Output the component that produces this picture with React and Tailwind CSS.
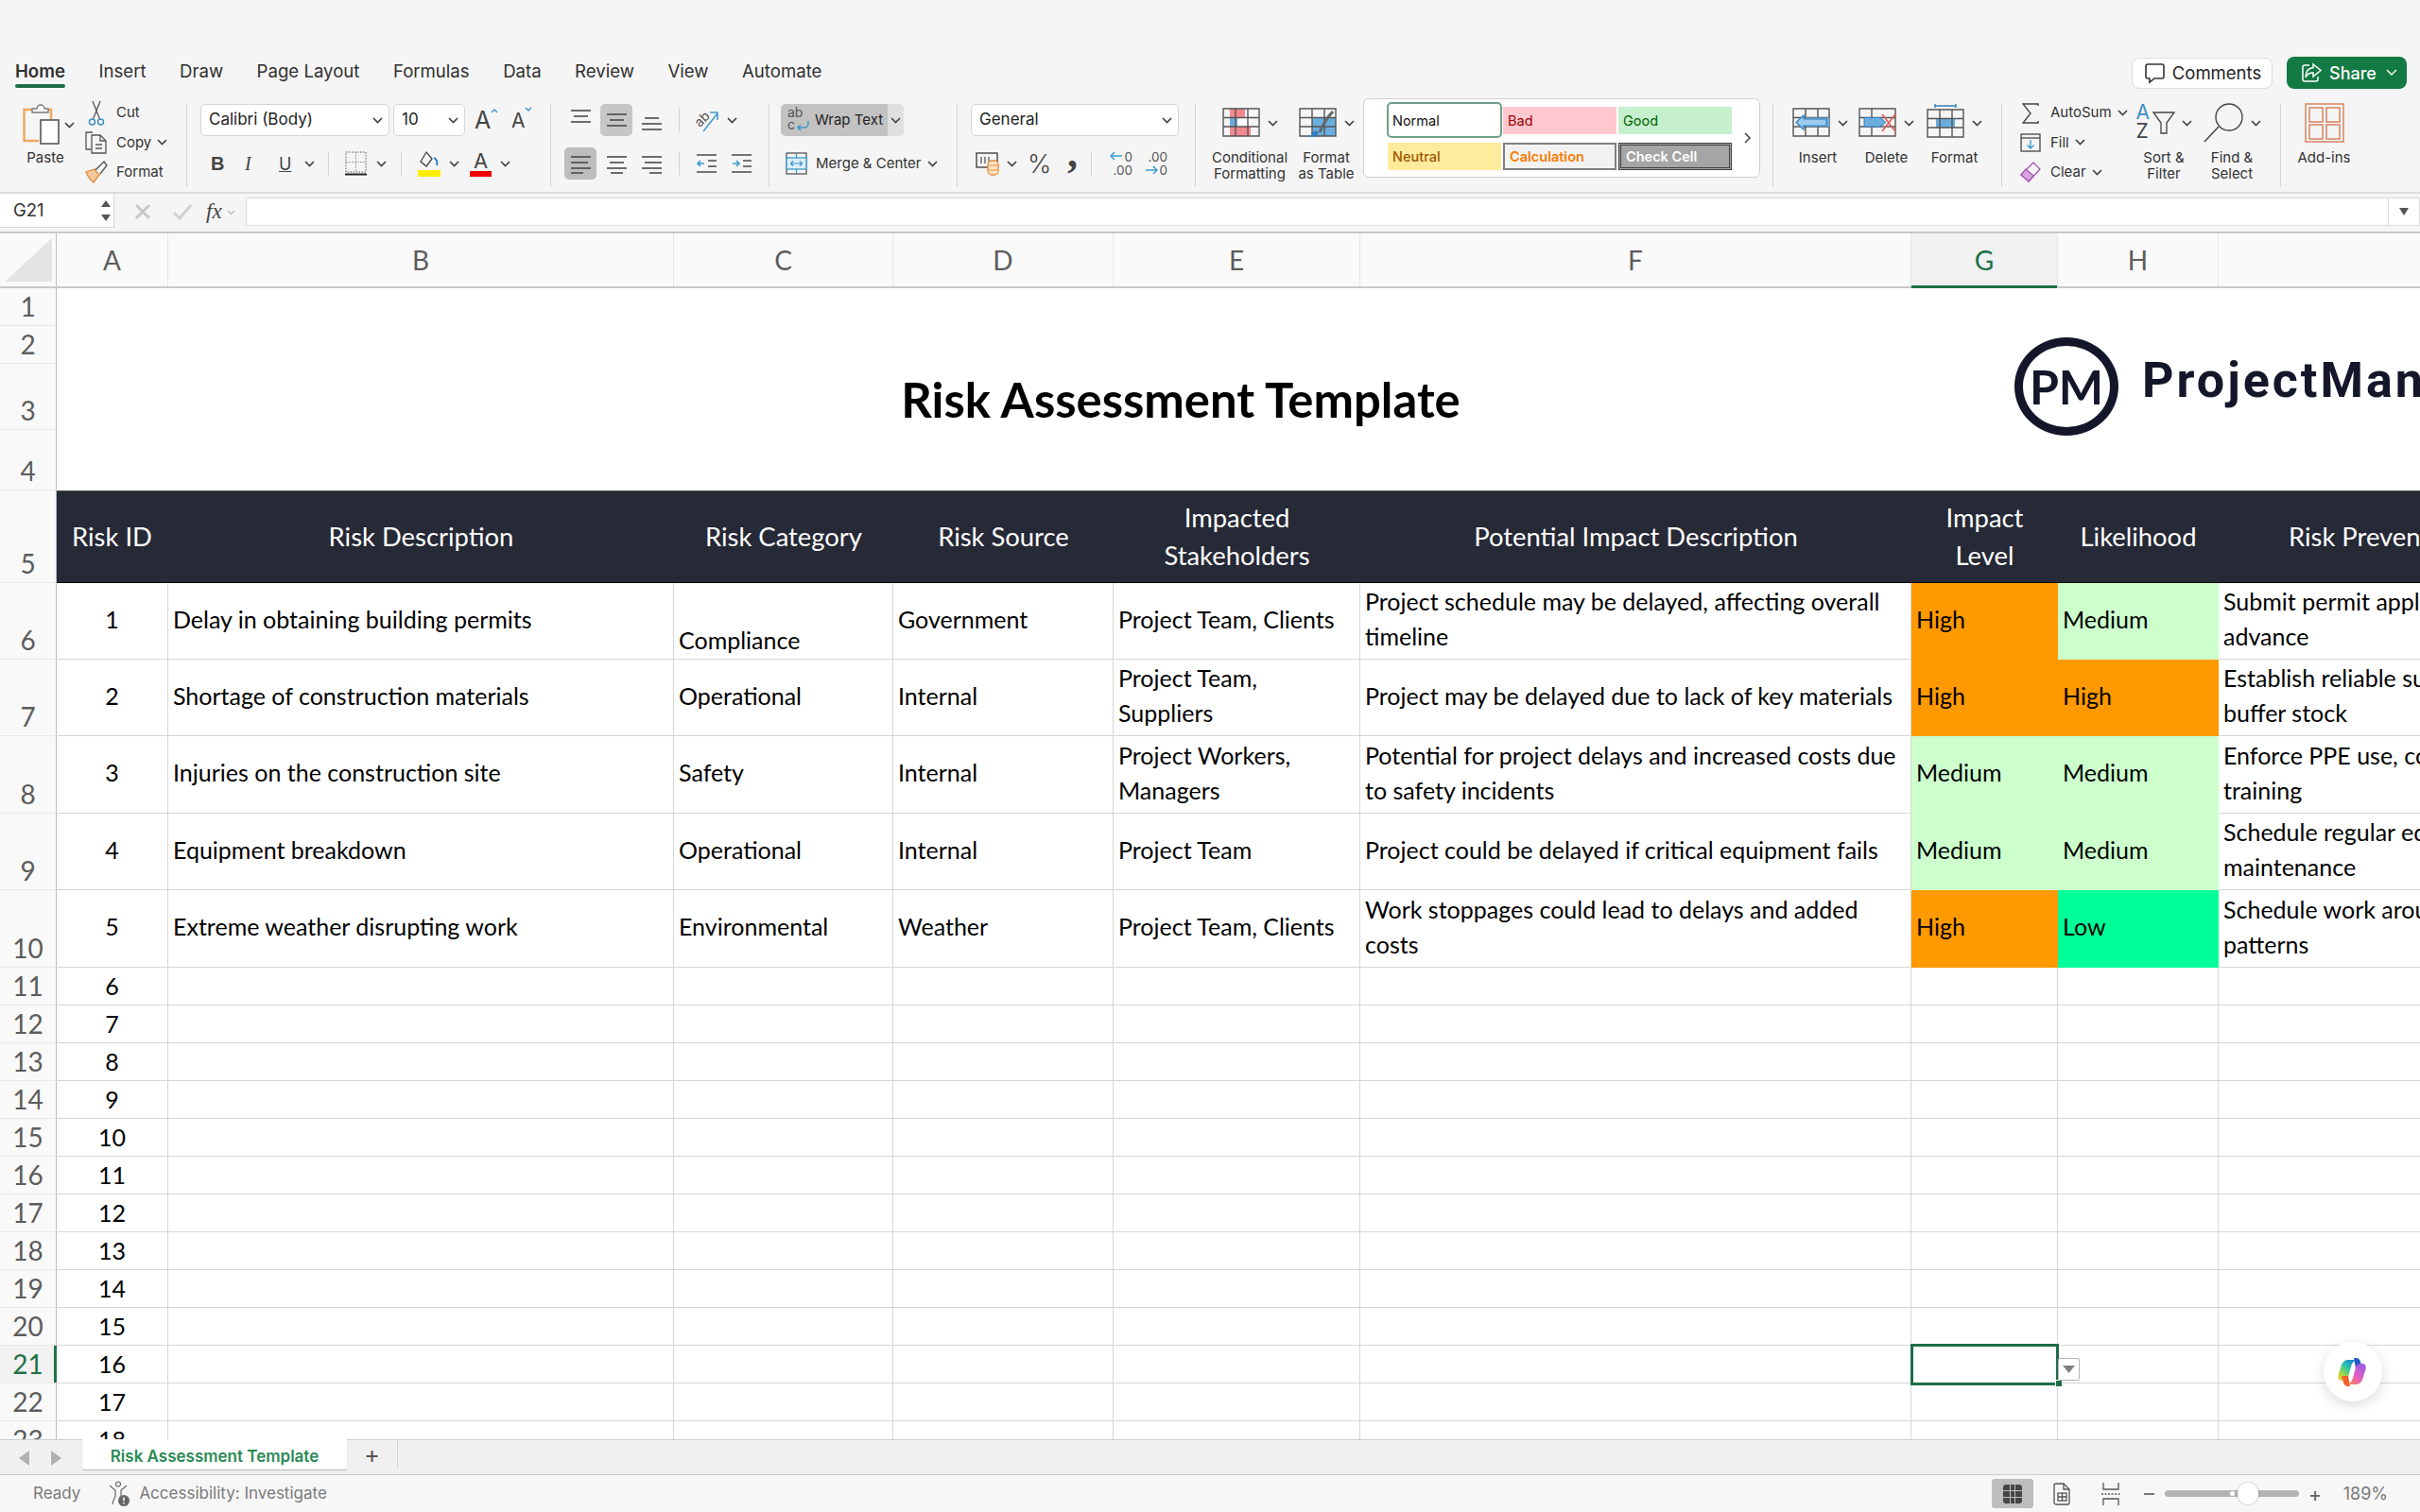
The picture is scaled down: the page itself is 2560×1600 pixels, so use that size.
import React from "react";

const colGrid = "grid grid-cols-[60px_118px_535px_232px_233px_261px_583px_155px_170px_500px] w-[2847px]";
const line = "border-[#d6d6d6]";

const columns = ["A", "B", "C", "D", "E", "F", "G", "H"];

const headers = [
  { text: "Risk ID" },
  { text: "Risk Description" },
  { text: "Risk Category" },
  { text: "Risk Source" },
  { text: "Impacted\nStakeholders" },
  { text: "Potential Impact Description" },
  { text: "Impact\nLevel" },
  { text: "Likelihood" },
  { text: "Risk Prevention" },
];

const risks = [
  { h: 81, id: 1, desc: "Delay in obtaining building permits", cat: "Compliance", src: "Government", who: "Project Team, Clients", imp: "Project schedule may be delayed, affecting overall\ntimeline", lvl: "High", like: "Medium", prev: "Submit permit applications well in\nadvance" },
  { h: 81, id: 2, desc: "Shortage of construction materials", cat: "Operational", src: "Internal", who: "Project Team,\nSuppliers", imp: "Project may be delayed due to lack of key materials", lvl: "High", like: "High", prev: "Establish reliable suppliers and\nbuffer stock" },
  { h: 82, id: 3, desc: "Injuries on the construction site", cat: "Safety", src: "Internal", who: "Project Workers,\nManagers", imp: "Potential for project delays and increased costs due\nto safety incidents", lvl: "Medium", like: "Medium", prev: "Enforce PPE use, conduct safety\ntraining" },
  { h: 81, id: 4, desc: "Equipment breakdown", cat: "Operational", src: "Internal", who: "Project Team", imp: "Project could be delayed if critical equipment fails", lvl: "Medium", like: "Medium", prev: "Schedule regular equipment\nmaintenance" },
  { h: 82, id: 5, desc: "Extreme weather disrupting work", cat: "Environmental", src: "Weather", who: "Project Team, Clients", imp: "Work stoppages could lead to delays and added\ncosts", lvl: "High", like: "Low", prev: "Schedule work around weather\npatterns" },
];

const fills = {
  High: "bg-[#ff9900]",
  Medium: "bg-[#ccffcc]",
  Low: "bg-[#00ff99]",
};

function Chev({ className = "" }) {
  return (
    <svg width="11" height="7" viewBox="0 0 11 7" className={"shrink-0 " + className} fill="none" stroke="#444" strokeWidth="1.7">
      <path d="M1 1l4.5 4.5L10 1" />
    </svg>
  );
}

function Lines({ rows, w = 21 }) {
  // rows: [y, x1, x2]
  return (
    <svg width={w} height="24" viewBox={`0 0 ${w} 24`} stroke="#4a4a4a" strokeWidth="1.6">
      {rows.map(([y, a, b], i) => (
        <path key={i} d={`M${a} ${y}H${b}`} />
      ))}
    </svg>
  );
}

function SmallAction({ icon, label, chev }) {
  return (
    <div className="flex items-center h-[32px] gap-[9px]">
      <div className="w-[24px] h-[30px] flex items-center justify-center">{icon}</div>
      <span className="text-[15px] text-[#333]">{label}</span>
      {chev && <Chev className="-ml-[3px]" />}
    </div>
  );
}

function Sep({ className = "" }) {
  return <div className={"w-[1px] h-[26px] bg-[#d4d4d4] " + className} />;
}

function Select({ label, className }) {
  return (
    <div className={"h-[34px] bg-white border border-[#d5d5d5] rounded-[5px] flex items-center justify-between pl-[8px] pr-[6px] text-[17px] text-[#222] " + className}>
      <span>{label}</span>
      <Chev />
    </div>
  );
}

function GridIcon({ children, w = 40, h = 32 }) {
  return (
    <svg width={w} height={h} viewBox={`0 0 ${w} ${h}`} fill="none">
      {children}
    </svg>
  );
}

const gridLines = "M1 1h38v29H1zM14 1v29M27 1v29M1 10.5h38M1 20h38";

function BigAction({ icon, label, chev = true, w }) {
  return (
    <div className={"flex flex-col items-center shrink-0 " + w}>
      <div className="h-[40px] flex items-center">
        {icon}
        {chev && <Chev className="ml-[8px]" />}
      </div>
      <div className="mt-[8px] text-center text-[15px] leading-[17px] text-[#333] whitespace-pre">{label}</div>
    </div>
  );
}

function StyleCell({ label, className }) {
  return (
    <div className={"w-[120px] h-[29px] flex items-center pl-[5px] text-[14.5px] " + className}>{label}</div>
  );
}

function Ribbon() {
  return (
    <div className="h-[203px] bg-[#f5f5f5] [font-family:Inter,sans-serif] shrink-0 overflow-hidden">
      {/* tabs row */}
      <div className="h-[104px] flex items-start pt-[60px] relative">
        <div className="flex pl-[16px] gap-[35.5px] text-[18.6px] text-[#303030] leading-[30px]">
          <div className="relative font-semibold w-[53px]">
            Home
            <div className="absolute left-0 right-0 top-[29px] h-[4px] rounded-full bg-[#1e6f47]" />
          </div>
          <div>Insert</div>
          <div>Draw</div>
          <div>Page Layout</div>
          <div>Formulas</div>
          <div>Data</div>
          <div>Review</div>
          <div>View</div>
          <div>Automate</div>
        </div>
        <div className="ml-auto flex items-center gap-[15px] pr-[14px]">
          <div className="w-[149px] h-[33px] bg-white border border-[#dedede] rounded-[8px] flex items-center justify-center gap-[7px] text-[18.5px] leading-none text-[#222]">
            <svg width="24" height="24" viewBox="0 0 24 24" fill="none" stroke="#333" strokeWidth="1.6">
              <path d="M5 3h15a2 2 0 0 1 2 2v11a2 2 0 0 1-2 2h-8l-5 4v-4H5a2 2 0 0 1-2-2V5a2 2 0 0 1 2-2z" />
            </svg>
            Comments
          </div>
          <div className="w-[127px] h-[34px] bg-[#137a43] rounded-[8px] flex items-center pl-[14px] gap-[7px] text-[18px] font-medium text-white">
            <svg width="24" height="24" viewBox="0 0 24 24" fill="none" stroke="#fff" strokeWidth="1.5">
              <path d="M10 4H5a2 2 0 0 0-2 2v13a2 2 0 0 0 2 2h12a2 2 0 0 0 2-2v-3" />
              <path d="M14 3l8 6.5-8 6.5v-4c-4 0-6.500 1.500-8 5 0-6 3-10 8-10.500z" />
            </svg>
            Share
            <svg width="12" height="8" viewBox="0 0 12 8" fill="none" stroke="#fff" strokeWidth="1.4" className="ml-[3px]">
              <path d="M1 1l5 5 5-5" />
            </svg>
          </div>
        </div>
      </div>

      {/* command groups */}
      <div className="flex items-start h-[94px]">
        {/* clipboard */}
        <div className="w-[198px] h-[88px] mt-[6px] border-r border-[#d4d4d4] flex shrink-0 pl-[24px]">
          <div className="w-[66px] shrink-0">
            <div className="flex items-center h-[44px]">
              <svg width="40" height="44" viewBox="0 0 40 44" fill="none">
                <path d="M13 6H1.500v33H17" stroke="#f0a860" strokeWidth="2.500" />
                <path d="M27 6h3v10" stroke="#f0a860" strokeWidth="2.500" />
                <path d="M10 9V5h5a4 4 0 0 1 8 0h4v4z" fill="#fff" stroke="#777" strokeWidth="1.300" />
                <rect x="19" y="17" width="19" height="25" fill="#fff" stroke="#555" strokeWidth="1.600" />
              </svg>
              <Chev className="ml-[4px]" />
            </div>
            <div className="text-[15px] leading-[18px] mt-[4px] text-[#333] w-[48px] text-center">Paste</div>
          </div>
          <div className="-mt-[6px] flex flex-col">
            <SmallAction
              label="Cut"
              icon={
                <svg width="18" height="28" viewBox="0 0 18 28" fill="none">
                  <path d="M13 1L5.500 20M5 1l7.500 19" stroke="#555" strokeWidth="1.300" />
                  <circle cx="4.500" cy="23" r="3" stroke="#3d8fc4" strokeWidth="1.500" />
                  <circle cx="13.500" cy="23" r="3" stroke="#3d8fc4" strokeWidth="1.500" />
                </svg>
              }
            />
            <SmallAction
              label="Copy"
              chev
              icon={
                <svg width="24" height="24" viewBox="0 0 24 24" fill="none" stroke="#555" strokeWidth="1.300">
                  <path d="M8 1H1v18h5" />
                  <path d="M7 4h9l6 6v13H7z" fill="#f5f5f5" />
                  <path d="M16 4v6h6M11 14h7M11 18h7" />
                </svg>
              }
            />
            <SmallAction
              label="Format"
              icon={
                <svg width="24" height="24" viewBox="0 0 24 24" fill="none">
                  <path d="M1 12l9-3 5 6-6 8c-3-2-6-6-8-11z" fill="#f8c99a" stroke="#e28a3c" strokeWidth="1.300" />
                  <path d="M11 10l9-9 3 4-7 9" stroke="#555" strokeWidth="1.400" fill="#f5f5f5" />
                </svg>
              }
            />
          </div>
        </div>

        {/* font */}
        <div className="w-[385px] h-[88px] mt-[6px] border-r border-[#d4d4d4] shrink-0 pl-[14px]">
          <div className="flex items-center h-[34px]">
            <Select label="Calibri (Body)" className="w-[200px]" />
            <Select label="10" className="w-[76px] ml-[4px]" />
            <div className="relative text-[25px] text-[#444] ml-[10px] w-[29px] leading-none">
              A
              <svg width="8" height="5" viewBox="0 0 8 5" fill="none" stroke="#3d8fc4" strokeWidth="1.300" className="absolute left-[17px] top-[0px]">
                <path d="M1 4l3-3 3 3" />
              </svg>
            </div>
            <div className="relative text-[21px] text-[#444] ml-[10px] w-[24px] leading-none">
              A
              <svg width="8" height="5" viewBox="0 0 8 5" fill="none" stroke="#3d8fc4" strokeWidth="1.300" className="absolute left-[14px] top-[-4px]">
                <path d="M1 1l3 3 3-3" />
              </svg>
            </div>
          </div>
          <div className="flex items-center h-[34px] mt-[12px]">
            <span className="w-[14px] ml-[11px] text-[20px] font-bold text-[#444] [font-family:'Liberation_Sans',sans-serif]">B</span>
            <span className="w-[14px] ml-[22px] text-[20px] italic text-[#444] [font-family:'Liberation_Serif',serif]">I</span>
            <span className="w-[14px] ml-[22px] text-[18px] underline text-[#444]">U</span>
            <Chev className="ml-[13px]" />
            <Sep className="ml-[14px]" />
            <svg width="23" height="26" viewBox="0 0 23 26" fill="none" className="ml-[17px]">
              <rect x="1" y="1" width="21" height="21" stroke="#555" strokeWidth="1" strokeDasharray="1.500 1.500" />
              <path d="M11.500 1v21M1 11.500h21" stroke="#888" strokeWidth="1" strokeDasharray="1.500 1.500" />
              <path d="M0 24.500h23" stroke="#222" strokeWidth="2" />
            </svg>
            <Chev className="ml-[10px]" />
            <Sep className="ml-[15px]" />
            <svg width="24" height="28" viewBox="0 0 24 28" fill="none" className="ml-[17px]">
              <path d="M9 2L3 12l6 5 6-8z" stroke="#444" strokeWidth="1.300" />
              <path d="M17 8c3 1 4 5 3 8" stroke="#2f7fc0" strokeWidth="2" />
              <rect x="0" y="21" width="24" height="7" fill="#ffee00" />
            </svg>
            <Chev className="ml-[9px]" />
            <div className="relative w-[23px] ml-[11px] h-[28px] text-center text-[22px] leading-[22px] text-[#444]">
              A
              <div className="absolute left-0 right-0 bottom-0 h-[6px] bg-[#ee0000]" />
            </div>
            <Chev className="ml-[9px]" />
          </div>
        </div>

        {/* alignment */}
        <div className="w-[231px] h-[88px] mt-[6px] border-r border-[#d4d4d4] shrink-0 pl-[14px]">
          <div className="flex items-center h-[34px]">
            <div className="w-[34px] flex justify-center">
              <Lines rows={[[2, 0, 21], [8, 3, 18], [14, 0, 21]]} />
            </div>
            <div className="w-[34px] h-[34px] ml-[4px] rounded-[5px] bg-[#c6c6c6] flex items-center justify-center">
              <Lines rows={[[6, 0, 21], [12, 3, 18], [18, 0, 21]]} />
            </div>
            <div className="w-[21px] ml-[10px]">
              <Lines rows={[[10, 3, 18], [16, 0, 21], [22, 0, 21]]} />
            </div>
            <Sep className="ml-[18px]" />
            <div className="relative w-[25px] h-[30px] ml-[17px]">
              <span className="absolute left-[-2px] top-[3px] -rotate-45 text-[14px] text-[#555]">ab</span>
              <svg width="25" height="30" viewBox="0 0 25 30" fill="none" stroke="#3d9ac9" strokeWidth="1.500" className="absolute inset-0">
                <path d="M8 27L23 8M15 7h8v8" />
              </svg>
            </div>
            <Chev className="ml-[8px]" />
          </div>
          <div className="flex items-center h-[34px] mt-[12px]">
            <div className="w-[34px] h-[34px] rounded-[5px] bg-[#bdbdbd] flex items-center justify-center">
              <Lines rows={[[5, 0, 21], [11, 0, 18], [17, 0, 21], [22, 0, 13]]} />
            </div>
            <div className="w-[34px] ml-[4px] flex justify-center">
              <Lines rows={[[5, 0, 21], [11, 3, 18], [17, 0, 21], [22, 4, 17]]} />
            </div>
            <div className="w-[21px] ml-[10px]">
              <Lines rows={[[5, 0, 21], [11, 3, 21], [17, 0, 21], [22, 8, 21]]} />
            </div>
            <Sep className="ml-[18px]" />
            <svg width="21" height="24" viewBox="0 0 21 24" fill="none" className="ml-[18px]">
              <path d="M0 3h21M12 9h9M12 15h9M0 21h21" stroke="#4a4a4a" strokeWidth="1.600" />
              <path d="M8 12H1M4 9l-3 3 3 3" stroke="#3d9ac9" strokeWidth="1.600" />
            </svg>
            <svg width="21" height="24" viewBox="0 0 21 24" fill="none" className="ml-[16px]">
              <path d="M0 3h21M12 9h9M12 15h9M0 21h21" stroke="#4a4a4a" strokeWidth="1.600" />
              <path d="M1 12h7M5 9l3 3-3 3" stroke="#3d9ac9" strokeWidth="1.600" />
            </svg>
          </div>
        </div>

        {/* wrap and merge */}
        <div className="w-[199px] h-[88px] mt-[6px] border-r border-[#d4d4d4] shrink-0 pl-[12px]">
          <div className="flex w-[130px] h-[34px] rounded-[5px] overflow-hidden">
            <div className="w-[113px] bg-[#c2c2c2] flex items-center pl-[7px]">
              <div className="relative w-[22px] h-[30px] text-[14px] leading-[13px] text-[#555]">
                ab
                <br />c
                <svg width="14" height="12" viewBox="0 0 14 12" fill="none" stroke="#3d9ac9" strokeWidth="1.500" className="absolute left-[9px] top-[16px]">
                  <path d="M13 0v3a4 4 0 0 1-4 4H2M5 4L2 7l3 3" />
                </svg>
              </div>
              <span className="ml-[7px] text-[15px] text-[#222]">Wrap Text</span>
            </div>
            <div className="flex-1 bg-[#e0e0e0] flex items-center justify-center">
              <Chev />
            </div>
          </div>
          <div className="flex items-center h-[34px] mt-[12px] pl-[5px]">
            <svg width="23" height="24" viewBox="0 0 23 24" fill="none">
              <rect x="1" y="1" width="21" height="22" stroke="#555" strokeWidth="1.300" />
              <rect x="1" y="6" width="21" height="12" fill="#dbeef8" stroke="#3d9ac9" strokeWidth="1.300" />
              <path d="M6 12h11M8 9.500L5.500 12 8 14.500M15 9.500l2.500 2.500-2.500 2.500M11.500 1v5M11.500 18v5" stroke="#3d8fc4" strokeWidth="1.200" />
            </svg>
            <span className="ml-[9px] text-[15px] text-[#333]">Merge &amp; Center</span>
            <Chev className="ml-[7px]" />
          </div>
        </div>

        {/* number */}
        <div className="w-[252px] h-[88px] mt-[6px] border-r border-[#d4d4d4] shrink-0 pl-[14px]">
          <Select label="General" className="w-[220px]" />
          <div className="flex items-center h-[34px] mt-[12px] pl-[5px]">
            <svg width="25" height="26" viewBox="0 0 25 26" fill="none">
              <rect x="1" y="2" width="22" height="15" stroke="#444" strokeWidth="1.400" />
              <path d="M6 6v7M10 6v7M14 6v7" stroke="#666" strokeWidth="1.400" />
              <rect x="13" y="10" width="11" height="15" rx="4" fill="#fbe3c8" stroke="#e78f3a" strokeWidth="1.300" />
              <path d="M13 15h11M13 20h11" stroke="#e78f3a" strokeWidth="1.200" />
            </svg>
            <Chev className="ml-[8px]" />
            <span className="ml-[11px] w-[23px] text-[27px] leading-none font-light text-[#444]">%</span>
            <span className="ml-[19px] w-[12px] text-[44px] leading-none font-bold text-[#444] -mt-[20px] [font-family:'Liberation_Serif',serif]">,</span>
            <Sep className="ml-[13px]" />
            <div className="relative w-[24px] h-[28px] ml-[19px] text-[13.500px] leading-[14px] text-right text-[#555]">
              0
              <br />.00
              <svg width="14" height="10" viewBox="0 0 14 10" fill="none" stroke="#3d9ac9" strokeWidth="1.500" className="absolute left-0 top-[1px]">
                <path d="M13 5H1M5 1L1 5l4 4" />
              </svg>
            </div>
            <div className="relative w-[24px] h-[28px] ml-[13px] text-[13.500px] leading-[14px] text-right text-[#555]">
              .00
              <br />0
              <svg width="14" height="10" viewBox="0 0 14 10" fill="none" stroke="#3d9ac9" strokeWidth="1.500" className="absolute left-0 top-[16px]">
                <path d="M1 5h12M9 1l4 4-4 4" />
              </svg>
            </div>
          </div>
        </div>

        {/* styles */}
        <div className="w-[611px] h-[88px] mt-[6px] border-r border-[#d4d4d4] shrink-0 flex">
          <BigAction
            w="w-[90px] ml-[12px]"
            label={"Conditional\nFormatting"}
            icon={
              <GridIcon>
                <path d="M8 1h16v10H8zM14 10h16v10H14zM8 20h22v10H8z" fill="#f2888e" />
                <path d="M8 10.500h14V20H8z" fill="#6aaee0" />
                <path d="M16 10.500h14V20H16z" fill="#fff" />
                <path d={gridLines} stroke="#555" strokeWidth="1.400" />
              </GridIcon>
            }
          />
          <BigAction
            w="w-[70px] ml-[1px]"
            label={"Format\nas Table"}
            icon={
              <GridIcon>
                <path d="M14 10.500h25V30H14z" fill="#6aaee0" />
                <path d={gridLines} stroke="#555" strokeWidth="1.400" />
                <path d="M36 4C30 10 24 20 22 26" stroke="#666" strokeWidth="3" />
                <path d="M12 31c3 0 8-1 9-5l-3-2c-3 1-5 4-6 7z" fill="#2f7fc0" />
              </GridIcon>
            }
          />
          <div className="w-[420px] h-[84px] -mt-[6px] ml-[4px] bg-white border border-[#cfcfcf] rounded-[6px] relative pl-[25px] shrink-0">
            <div className="flex gap-[2px] mt-[8px]">
              <div className="relative">
                <StyleCell label="Normal" className="bg-white text-[#111]" />
                <div className="absolute -left-[1px] -right-[1px] -top-[5px] -bottom-[4px] rounded-[5px] border-2 border-[#6f9f88]" />
              </div>
              <StyleCell label="Bad" className="bg-[#ffc7ce] text-[#9c0006]" />
              <StyleCell label="Good" className="bg-[#c6efce] text-[#006100]" />
            </div>
            <div className="flex gap-[2px] mt-[9px]">
              <StyleCell label="Neutral" className="font-medium bg-[#ffeb9c] text-[#9c5700]" />
              <StyleCell label="Calculation" className="font-semibold bg-[#f2f2f2] text-[#fa7d00] border-2 border-[#7f7f7f]" />
              <StyleCell label="Check Cell" className="font-semibold bg-[#a5a5a5] text-white border-[3px] border-double border-[#3f3f3f]" />
            </div>
            <svg width="8" height="12" viewBox="0 0 8 12" fill="none" stroke="#444" strokeWidth="1.500" className="absolute right-[8px] top-[35px]">
              <path d="M1 1l5 5-5 5" />
            </svg>
          </div>
        </div>

        {/* cells */}
        <div className="w-[242px] h-[88px] mt-[6px] border-r border-[#d4d4d4] shrink-0 flex pl-[19px] gap-[17px]">
          <BigAction
            w="w-[56px]"
            label="Insert"
            icon={
              <GridIcon w={44}>
                <path d="M5 1h38v29H5zM18 1v29M31 1v29M5 10.500h38M5 20h38" stroke="#555" strokeWidth="1.400" />
                <path d="M18 10.500h25V20H18z" fill="#6aaee0" />
                <path d="M16 8l-8 7.500 8 7.500v-4h24v-7H16z" fill="#9ccbee" stroke="#2f7fc0" strokeWidth="1.200" />
              </GridIcon>
            }
          />
          <BigAction
            w="w-[55px]"
            label="Delete"
            icon={
              <GridIcon>
                <path d="M1 1h38v29H1zM14 1v29M1 10.500h38M1 20h38" stroke="#555" strokeWidth="1.400" />
                <path d="M6 10.500h17l6 5-6 4.500H6z" fill="#6aaee0" stroke="#2f7fc0" strokeWidth="1" />
                <path d="M25 7l14 18M39 7L25 25" stroke="#e0605a" strokeWidth="1.800" />
              </GridIcon>
            }
          />
          <BigAction
            w="w-[55px]"
            label="Format"
            icon={
              <GridIcon h={40}>
                <path d="M9 2h22M9 0v4M31 0v4" stroke="#2f7fc0" strokeWidth="1.400" />
                <g transform="translate(0 5)">
                  <path d="M10 10.500h20V20H10z" fill="#6aaee0" />
                  <path d={gridLines} stroke="#555" strokeWidth="1.400" />
                </g>
              </GridIcon>
            }
          />
        </div>

        {/* editing */}
        <div className="w-[295px] h-[88px] mt-[6px] border-r border-[#d4d4d4] shrink-0 flex pl-[18px]">
          <div className="-mt-[6px] flex flex-col w-[117px] shrink-0">
            <SmallAction
              label="AutoSum"
              chev
              icon={
                <svg width="18" height="22" viewBox="0 0 18 22" fill="none" stroke="#444" strokeWidth="1.400">
                  <path d="M17 3V1H1l8 10-8 10h16v-2" />
                </svg>
              }
            />
            <SmallAction
              label="Fill"
              chev
              icon={
                <svg width="22" height="20" viewBox="0 0 22 20" fill="none">
                  <rect x="1" y="1" width="20" height="18" stroke="#444" strokeWidth="1.300" />
                  <path d="M1 5h20" stroke="#444" strokeWidth="1.300" />
                  <path d="M11 7v9M7.500 12.500L11 16l3.500-3.500" stroke="#3d9ac9" strokeWidth="1.400" />
                </svg>
              }
            />
            <SmallAction
              label="Clear"
              chev
              icon={
                <svg width="22" height="22" viewBox="0 0 22 22" fill="none" stroke="#a855b5" strokeWidth="1.300">
                  <path d="M14 1l7 7-12 13-8-7z" />
                  <path d="M1 14l5-6 8 7-5 6z" fill="#d6a5dd" />
                </svg>
              }
            />
          </div>
          <BigAction
            w="w-[72px] shrink-0"
            label={"Sort &\nFilter"}
            icon={
              <div className="relative w-[40px] h-[42px] text-[21px] leading-[20px]">
                <div className="text-[#3d8fc4]">A</div>
                <div className="text-[#444]">Z</div>
                <svg width="24" height="24" viewBox="0 0 24 24" fill="none" stroke="#444" strokeWidth="1.300" className="absolute left-[17px] top-[9px]">
                  <path d="M1 1h22l-8 11v11H9V12z" />
                </svg>
              </div>
            }
          />
          <BigAction
            w="w-[72px] shrink-0"
            label={"Find &\nSelect"}
            icon={
              <svg width="42" height="42" viewBox="0 0 42 42" fill="none" stroke="#444" strokeWidth="1.400">
                <ellipse cx="27" cy="15" rx="14" ry="14" />
                <path d="M16 25L1 41" />
              </svg>
            }
          />
        </div>

        {/* add-ins */}
        <div className="w-[148px] h-[88px] mt-[6px] shrink-0 pl-[8px]">
          <BigAction
            w="w-[75px]"
            chev={false}
            label="Add-ins"
            icon={
              <svg width="42" height="42" viewBox="0 0 42 42" fill="none" stroke="#d9825f" strokeWidth="1.500">
                <rect x="1" y="1" width="40" height="40" />
                <rect x="5" y="5" width="14" height="15" />
                <rect x="23" y="5" width="14" height="15" />
                <rect x="5" y="23" width="14" height="15" />
                <rect x="23" y="23" width="14" height="15" />
              </svg>
            }
          />
        </div>
      </div>
      <div className="h-[5px]" />
    </div>
  );
}

function FormulaBar() {
  return (
    <div className="h-[42px] bg-[#f5f5f5] border-t-2 border-[#dcdcdc] flex items-start shrink-0 [font-family:Inter,sans-serif]">
      <div className="w-[121px] h-[36px] bg-white border-r border-b border-[#d8d8d8] flex items-center justify-between pl-[14px] pr-[3px] text-[18.5px] text-[#333]">
        G21
        <svg width="10" height="24" viewBox="0 0 10 24" fill="#555">
          <path d="M5 1l5 7H0zM5 23l5-7H0z" />
        </svg>
      </div>
      <svg width="18" height="18" viewBox="0 0 18 18" stroke="#c8c8c8" strokeWidth="3" className="ml-[21px] mt-[10px]">
        <path d="M2 2l14 14M16 2L2 16" />
      </svg>
      <svg width="22" height="18" viewBox="0 0 22 18" fill="none" stroke="#d0d0d0" strokeWidth="3" className="ml-[22px] mt-[10px]">
        <path d="M2 10l6 6L20 2" />
      </svg>
      <span className="ml-[14px] mt-[2px] text-[23px] italic text-[#444] [font-family:'Liberation_Serif',serif]">fx</span>
      <svg width="9" height="6" viewBox="0 0 9 6" fill="none" stroke="#bbb" strokeWidth="1.300" className="ml-[5px] mt-[17px]">
        <path d="M1 1l3.500 3.500L8 1" />
      </svg>
      <div className="ml-[11px] mt-[4px] h-[30px] flex-1 bg-white border border-[#dadada] rounded-l-[3px] flex justify-end">
        <div className="w-[33px] h-[28px] border-l border-[#dadada] flex items-center justify-center">
          <svg width="10" height="8" viewBox="0 0 10 8" fill="#555">
            <path d="M0 0h10L5 8z" />
          </svg>
        </div>
      </div>
    </div>
  );
}

function ColumnHeader() {
  return (
    <div className={colGrid + " h-[60px] bg-[#fafafa] border-y-2 border-[#c8c8c8] shrink-0 [font-family:Lato,sans-serif] text-[28px] text-[#5c5c5c]"}>
      <div className="border-r border-[#bdbdbd] flex items-center justify-center">
        <svg width="50" height="46" viewBox="0 0 50 46">
          <path d="M50 0v46H0z" fill="#e4e4e4" />
        </svg>
      </div>
      {columns.map((c) => (
        <div
          key={c}
          className={
            c === "G"
              ? "relative flex items-center justify-center bg-[#f1f1f1] text-[#1f7145] border-r border-[#e6e6e6]"
              : "flex items-center justify-center border-r border-[#e6e6e6]"
          }
        >
          {c}
          {c === "G" && <div className="absolute left-0 right-0 -bottom-[2px] h-[3px] bg-[#1f7145]" />}
        </div>
      ))}
      <div />
    </div>
  );
}

function RowNum({ n, h }) {
  const active = n === 21;
  return (
    <div
      className={
        "relative flex items-end justify-center border-r border-b border-r-[#bdbdbd] border-b-[#e8e8e8] text-[28px] leading-[34px] pb-[3px] " +
        (active ? "bg-[#f1f1f1] text-[#1f7145]" : "bg-[#f9f9f9] text-[#5c5c5c]")
      }
      style={h ? { height: h } : undefined}
    >
      {n}
      {active && <div className="absolute -right-[1px] top-0 bottom-0 w-[3px] bg-[#1f7145]" />}
    </div>
  );
}

function Cell({ children, className = "" }) {
  return (
    <div className={"flex items-center whitespace-pre-line overflow-hidden px-[5px] leading-[37px] border-r border-b " + line + " " + className}>
      {children}
    </div>
  );
}

function Sheet() {
  const blank = [];
  for (let i = 0; i < 13; i++) blank.push(i + 6);

  return (
    <div className="relative flex-1 overflow-hidden bg-white [font-family:Lato,sans-serif] text-[25px] text-black">
      {/* rows 1-4 with the merged title block */}
      <div className="flex h-[214px]">
        <div className="w-[60px] shrink-0">
          <RowNum n={1} h={40} />
          <RowNum n={2} h={40} />
          <RowNum n={3} h={70} />
          <RowNum n={4} h={64} />
        </div>
        <div className="relative w-[2378px] shrink-0 pt-[90px] text-center text-[50.8px] leading-[56px] font-bold text-black">
          Risk Assessment Template
          {/* logo picture floats above the cells */}
          <div className="absolute left-[2071px] top-[52px] w-[110px] h-[104px] rounded-[50%] border-[9px] border-[#14172a] flex items-center justify-center text-[50px] font-bold leading-none text-[#14172a]">
            PM
          </div>
          <div className="absolute left-[2206px] top-[68px] text-[52px] leading-[60px] font-bold tracking-[3px] text-left text-[#14172a] whitespace-nowrap [font-family:Roboto,sans-serif]">
            ProjectManager
          </div>
        </div>
      </div>

      {/* table head */}
      <div className={colGrid + " h-[98px]"}>
        <RowNum n={5} />
        {headers.map((h, i) => (
          <div
            key={h.text}
            className={
              "bg-[#262936] border-y border-t-[#555] border-b-black flex items-center text-white text-[27.4px] leading-[40px] pb-[1px] whitespace-pre-line " +
              (i === 0 ? "justify-center pr-[1px]" : i === 8 ? "pl-[74px]" : "justify-center text-center")
            }
          >
            {h.text}
          </div>
        ))}
      </div>

      {/* filled rows */}
      {risks.map((r, i) => (
        <div key={r.id} className={colGrid} style={{ height: r.h }}>
          <RowNum n={i + 6} />
          <Cell className="justify-center pb-[4px]">{r.id}</Cell>
          <Cell className="pb-[4px]">{r.desc}</Cell>
          <Cell className={r.id === 1 ? "items-end pb-[1px]" : "pb-[4px]"}>{r.cat}</Cell>
          <Cell className="pb-[4px]">{r.src}</Cell>
          <Cell className="pb-[4px]">{r.who}</Cell>
          <Cell className="pb-[4px]">{r.imp}</Cell>
          <div className={"flex items-center pl-[5px] pb-[4px] " + fills[r.lvl]}>{r.lvl}</div>
          <div className={"flex items-center pl-[5px] pb-[4px] " + fills[r.like]}>{r.like}</div>
          <Cell className="pb-[4px]">{r.prev}</Cell>
        </div>
      ))}

      {/* empty numbered rows */}
      {blank.map((id, i) => (
        <div key={id} className={colGrid + " h-[40px]"}>
          <RowNum n={i + 11} />
          <Cell className="justify-center pb-[1px]">{id}</Cell>
          <Cell />
          <Cell />
          <Cell />
          <Cell />
          <Cell />
          <Cell />
          <Cell />
          <Cell />
        </div>
      ))}

      {/* selected cell G21 */}
      <div className="absolute left-[2021px] top-[1117px] w-[157px] h-[44px] border-[3px] border-[#1f6d47]" />
      <div className="absolute left-[2174px] top-[1155px] w-[8px] h-[8px] bg-[#1f6d47] border border-white" />
      <div className="absolute left-[2177px] top-[1132px] w-[23px] h-[24px] bg-white border border-[#b5b5b5] rounded-[2px] flex items-center justify-center">
        <svg width="13" height="8" viewBox="0 0 13 8" fill="#808080">
          <path d="M0 0h13L6.500 8z" />
        </svg>
      </div>

      {/* copilot button */}
      <div className="absolute left-[2458px] top-[1115px] w-[62px] h-[63px] rounded-full bg-white shadow-[0_4px_14px_rgba(0,0,0,0.14)] flex items-center justify-center">
        <svg width="32" height="30" viewBox="0 0 32 30">
          <defs>
            <linearGradient id="cpA" x1="0.9" y1="0" x2="0.1" y2="1">
              <stop offset="0" stopColor="#1f74d8" />
              <stop offset="0.4" stopColor="#25c4b0" />
              <stop offset="0.75" stopColor="#a5d63f" />
              <stop offset="1" stopColor="#f5cf3a" />
            </linearGradient>
            <linearGradient id="cpB" x1="0.9" y1="0" x2="0.1" y2="1">
              <stop offset="0" stopColor="#8f5be8" />
              <stop offset="0.55" stopColor="#e45fc4" />
              <stop offset="1" stopColor="#fb7f4a" />
            </linearGradient>
          </defs>
          <path d="M17 0h2c3 0 4.500 2 5 4l2 7h-7z" fill="#1f56c4" />
          <path d="M11 2h9c-3 1-5 3-6 7l-3 11c-1 3-3 4-5 4H4c-3 0-4.500-3-3.500-6L4 7c1-3 4-5 7-5z" fill="url(#cpA)" />
          <path d="M13 30h-2c-3 0-4.500-2-5-4l-2-7h7z" fill="#f0622f" />
          <path d="M19 28h-9c3-1 5-3 6-7l3-11c1-3 3-4 5-4h2c3 0 4.500 3 3.500 6L26 23c-1 3-4 5-7 5z" fill="url(#cpB)" />
        </svg>
      </div>
    </div>
  );
}

function SheetTabs() {
  return (
    <div className="h-[37px] bg-[#f0f0f0] border-t border-[#cccccc] flex items-start shrink-0 [font-family:Inter,sans-serif]">
      <svg width="12" height="16" viewBox="0 0 12 16" fill="#b0b0b0" className="ml-[20px] mt-[11px]">
        <path d="M11 0v16L0 8z" />
      </svg>
      <svg width="12" height="16" viewBox="0 0 12 16" fill="#b0b0b0" className="ml-[21px] mt-[11px]">
        <path d="M1 0v16l11-8z" />
      </svg>
      <div className="ml-[22px] w-[280px] h-[32px] -mt-[1px] pt-[5px] bg-white rounded-b-[3px] shadow-[0_1px_1px_rgba(0,0,0,0.25)] flex items-center justify-center text-[17px] font-semibold text-[#2a8a55]">
        Risk Assessment Template
      </div>
      <div className="w-[54px] h-[30px] border-r border-[#d4d4d4] flex items-center justify-center text-[25px] leading-none text-[#555]">+</div>
    </div>
  );
}

function StatusBar() {
  return (
    <div className="h-[40px] bg-[#f7f7f7] border-t border-[#cccccc] flex items-center shrink-0 [font-family:Inter,sans-serif] text-[17px] text-[#7a7a7a]">
      <span className="ml-[35px]">Ready</span>
      <svg width="23" height="28" viewBox="0 0 23 28" fill="none" stroke="#666" strokeWidth="1.200" className="ml-[30px]">
        <circle cx="10" cy="3.500" r="2.500" />
        <path d="M1 5l6 5v6c-1 3-3 6-3 9M19 5l-6 5v6" />
        <circle cx="16" cy="21" r="6" fill="#666" stroke="none" />
        <path d="M16 17.500v4M16 23v1.500" stroke="#fff" strokeWidth="1.500" />
      </svg>
      <span className="ml-[9px]">Accessibility: Investigate</span>
      <div className="ml-auto flex items-center pr-[34px]">
        <div className="w-[44px] h-[31px] rounded-[3px] bg-[#bdbdbd] flex items-center justify-center">
          <svg width="20" height="20" viewBox="0 0 20 20" fill="#454545">
            <path d="M3 0h4v6H0V3a3 3 0 0 1 3-3zM8 0h4v6H8zM13 0h4a3 3 0 0 1 3 3v3h-7zM0 7h7v6H0zM8 7h4v6H8zM13 7h7v6h-7zM0 14h7v6H3a3 3 0 0 1-3-3zM8 14h4v6H8zM13 14h7v3a3 3 0 0 1-3 3h-4z" />
          </svg>
        </div>
        <svg width="18" height="24" viewBox="0 0 18 24" fill="none" stroke="#555" strokeWidth="1.300" className="ml-[21px]">
          <path d="M3 1h8l6 6v14a2 2 0 0 1-2 2H3a2 2 0 0 1-2-2V3a2 2 0 0 1 2-2zM11 1v6h6" />
          <rect x="5" y="11" width="9" height="8" />
          <path d="M5 15h9M9.500 11v8" />
        </svg>
        <svg width="20" height="24" viewBox="0 0 20 24" fill="none" stroke="#555" strokeWidth="1.300" className="ml-[33px]">
          <path d="M2 0v7h16V0M2 24v-7h16v7" />
          <path d="M0 12h20" strokeDasharray="2 1.500" />
        </svg>
        <span className="ml-[25px] w-[11px] h-[2px] bg-[#777]" />
        <div className="relative ml-[11px] w-[142px] h-[7px] rounded-full bg-[#b3b3b3]">
          <div className="absolute left-[69px] top-[1px] w-[5px] h-[5px] rounded-full bg-white" />
          <div className="absolute left-[77px] -top-[8px] w-[22px] h-[23px] rounded-full bg-white shadow-[0_0_2px_rgba(0,0,0,0.35)]" />
        </div>
        <span className="ml-[10px] text-[22px] leading-none text-[#666] w-[14px]">+</span>
        <span className="ml-[23px] text-[18px]">189%</span>
      </div>
    </div>
  );
}

export default function App() {
  return (
    <div className="w-[2560px] h-[1600px] overflow-hidden flex flex-col bg-white">
      <Ribbon />
      <FormulaBar />
      <ColumnHeader />
      <Sheet />
      <SheetTabs />
      <StatusBar />
    </div>
  );
}
